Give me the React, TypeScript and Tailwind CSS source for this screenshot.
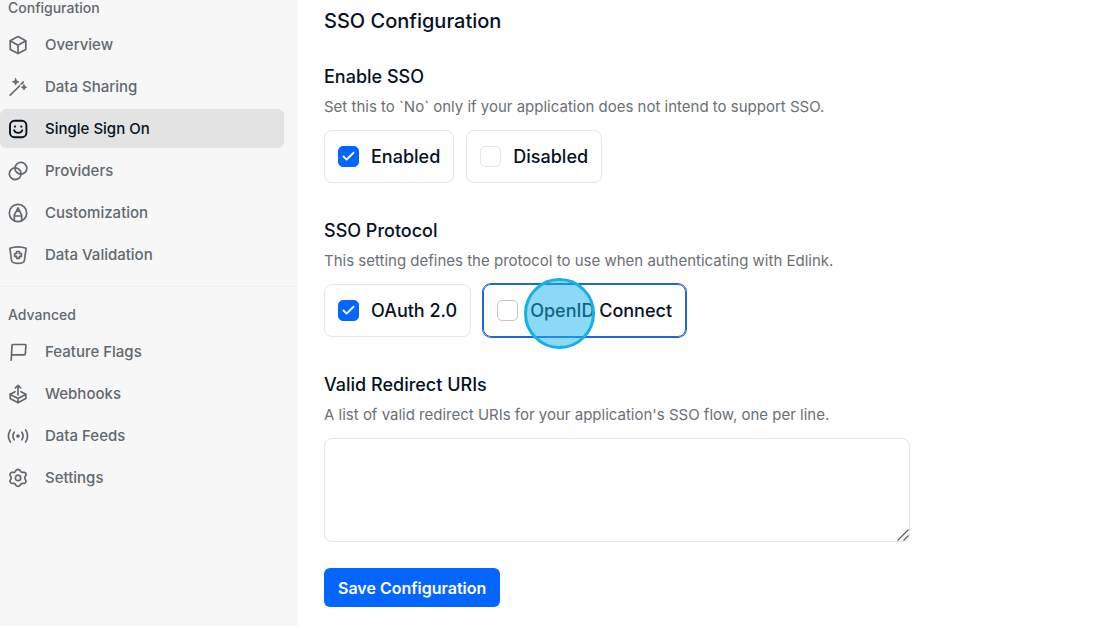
import React, { useState } from "react";
import { Check } from "lucide-react";

const icons: Record<string, React.ReactNode> = {
  cube: (
    <>
      <path d="M10 1.6 17.8 5.8v8.6L10 18.6l-7.8-4.2V5.8Z" />
      <path d="m2.5 6 7.5 4.2L17.5 6M10 10.2v8.2" />
    </>
  ),
  wand: (
    <>
      <path d="M2.2 18.2 11.5 9M13.2 7.2l2-2" />
      <path d="M7.6 1.4 8.6 3.9 11 4.8 8.6 5.7 7.6 8.1 6.7 5.7 4.3 4.8 6.7 3.9Z" fill="currentColor" strokeWidth="0.8" />
      <path d="m16 7.6.8 1.9 1.9.8-1.9.8-.8 1.9-.8-1.9-1.9-.8 1.9-.8Z" fill="currentColor" strokeWidth="0.8" />
    </>
  ),
  smile: (
    <>
      <rect x="2" y="1.8" width="16.4" height="16.4" rx="4.5" strokeWidth="1.9" />
      <path d="M6 11.2c.8 1.800 2.300 2.700 4.200 2.700s3.400-.9 4.200-2.700" />
      <path d="M7 7.500v.1M13.300 7.500v.1" strokeWidth="2.2" />
    </>
  ),
  rings: (
    <>
      <circle cx="7.2" cy="12.8" r="5.9" />
      <circle cx="12.9" cy="7.3" r="5.9" />
    </>
  ),
  brush: (
    <>
      <circle cx="10" cy="10" r="8.7" />
      <path d="M6.3 17.600v-5.400L10 4.800l3.700 7.400v5.400M6.300 13h7.400M8.500 8.200h3" />
    </>
  ),
  shield: (
    <>
      <path d="M1.9 3.3C4.5 2.3 7.2 1.8 10 1.8s5.500.5 8.100 1.500l-1.700 12.200c-.2 1.400-1 2-2.200 2.300-2.800.7-5.600.7-8.400 0-1.200-.3-2-.9-2.200-2.300Z" />
      <path d="M8.600 6.500h2.800v2h2v2.800h-2v2H8.600v-2h-2V8.500h2Z" />
    </>
  ),
  flag: <path d="M3.200 18.200 4 3.500c0-.6.400-1 1-1h12c.6 0 1 .4.900 1l-.6 8.400c0 .6-.4.900-1 .9H3.800" />,
  upload: (
    <>
      <path d="M7 7.700 2.200 10.300v4.300L10 18.700l7.800-4.100v-4.300L13 7.700" />
      <path d="m2.400 10.500 7.600 4 7.600-4M10 14.500v4" />
      <path d="M10 10.800V1.500M7.300 4 10 1.400 12.700 4" />
    </>
  ),
  signal: (
    <>
      <path d="M2.400 3.900c-2.400 3.700-2.400 8.500 0 12.200M6.200 6.200c-1.600 2.300-1.600 5.300 0 7.600M17.600 3.900c2.400 3.700 2.400 8.500 0 12.200M13.800 6.200c1.600 2.300 1.600 5.300 0 7.600" />
      <circle cx="10" cy="10" r="1" fill="currentColor" />
    </>
  ),
  gear: (
    <>
      <path d="M8.300 2.100c.9-.8 2.500-.8 3.400 0l1.200 1.700c.3.400.8.600 1.300.6l2-.1c1.200.3 2 1.700 1.700 2.900l-1 1.900c-.2.500-.2 1.100 0 1.600l1 1.900c.3 1.200-.5 2.600-1.700 2.900l-2-.1c-.5 0-1 .2-1.300.6l-1.200 1.700c-.9.800-2.500.8-3.400 0l-1.200-1.700c-.3-.4-.8-.6-1.300-.6l-2 .1c-1.200-.3-2-1.700-1.700-2.900l1-1.900c.2-.5.2-1.100 0-1.600l-1-1.900C1.800 6 2.600 4.600 3.800 4.300l2 .1c.5 0 1-.2 1.300-.6Z" />
      <circle cx="10" cy="9.900" r="2.700" />
    </>
  ),
};

const sections = [
  {
    title: "Configuration",
    items: [
      { label: "Overview", icon: "cube" },
      { label: "Data Sharing", icon: "wand" },
      { label: "Single Sign On", icon: "smile", active: true },
      { label: "Providers", icon: "rings" },
      { label: "Customization", icon: "brush" },
      { label: "Data Validation", icon: "shield" },
    ],
  },
  {
    title: "Advanced",
    items: [
      { label: "Feature Flags", icon: "flag" },
      { label: "Webhooks", icon: "upload" },
      { label: "Data Feeds", icon: "signal" },
      { label: "Settings", icon: "gear" },
    ],
  },
];

function Icon({ name }: { name: string }) {
  return (
    <svg
      viewBox="0 0 20 20"
      className="h-5 w-5 shrink-0 overflow-visible"
      fill="none"
      stroke="currentColor"
      strokeWidth="1.7"
      strokeLinecap="round"
      strokeLinejoin="round"
      aria-hidden="true"
    >
      {icons[name]}
    </svg>
  );
}

function Sidebar() {
  return (
    <nav className="w-[298px] shrink-0 bg-[#f7f7f7] text-[#62686e]">
      {sections.map((section, i) => (
        <div key={section.title} className={i > 0 ? "mt-3 border-t border-[#efefef] pt-5" : ""}>
          <h2 className="pl-2 text-[14px] font-medium leading-4">{section.title}</h2>
          <ul className="mt-[9px] flex flex-col gap-[3px] pr-[14px]">
            {section.items.map((item) => (
              <li key={item.label}>
                <a
                  href="#"
                  aria-current={item.active ? "page" : undefined}
                  className={`flex h-[39px] items-center gap-[17px] rounded-md pl-2 text-[15px] font-medium leading-[23px] ${
                    item.active ? "bg-[#e3e3e3] text-[#06121f]" : "hover:bg-[#eeeeee]"
                  }`}
                >
                  <Icon name={item.icon} />
                  {item.label}
                </a>
              </li>
            ))}
          </ul>
        </div>
      ))}
    </nav>
  );
}

type OptionProps = {
  label: string;
  checked: boolean;
  onChange: () => void;
  focused?: boolean;
};

function Option({ label, checked, onChange, focused }: OptionProps) {
  return (
    <label
      className={`relative flex h-[53px] items-center gap-3 rounded-lg border px-[13px] text-[18px] font-medium ${
        focused ? "border-[#2367d3] ring-1 ring-[#2367d3]" : "border-[#e6e6e6]"
      }`}
    >
      <span className="relative flex h-[21px] w-[21px]">
        <input
          type="checkbox"
          checked={checked}
          onChange={onChange}
          className={`h-full w-full appearance-none rounded-[5px] border bg-white checked:border-[#0566ff] checked:bg-[#0566ff] ${
            focused ? "border-[#c4c4c4]" : "border-[#e4e4e4]"
          }`}
        />
        {checked && (
          <Check className="pointer-events-none absolute left-[3px] top-[3px] h-[15px] w-[15px] text-white" strokeWidth={3} />
        )}
      </span>
      {label}
      {/* Click marker */}
      {focused && (
        <span className="pointer-events-none absolute -top-[7px] left-10 h-[71px] w-[71px] rounded-full border-[3px] border-[#14b0e6] bg-[#18b3eb]/50" />
      )}
    </label>
  );
}

function Field({ id, title, hint, children }: { id: string; title: string; hint: string; children: React.ReactNode }) {
  return (
    <section role="group" aria-labelledby={id}>
      <h2 id={id} className="text-[18px] font-medium leading-6">
        {title}
      </h2>
      <p className="mt-[6px] mb-[11px] text-[15px] leading-6 text-[#6c7074]">{hint}</p>
      {children}
    </section>
  );
}

export default function App() {
  const [enabled, setEnabled] = useState(true);
  const [oauth, setOauth] = useState(true);
  const [openid, setOpenid] = useState(false);

  return (
    <div className="flex min-h-screen bg-white font-['Inter',sans-serif] text-[#06121f]">
      <Sidebar />
      <main className="min-w-0 flex-1 px-[26px] pt-[7px]">
        <h1 className="text-[20px] font-medium leading-7">SSO Configuration</h1>

        <form className="mt-[30px] flex flex-col gap-9" onSubmit={(e) => e.preventDefault()}>
          <Field id="enable-sso" title="Enable SSO" hint="Set this to `No` only if your application does not intend to support SSO.">
            <div className="flex flex-wrap gap-3">
              <Option label="Enabled" checked={enabled} onChange={() => setEnabled(true)} />
              <Option label="Disabled" checked={!enabled} onChange={() => setEnabled(false)} />
            </div>
          </Field>

          <Field id="sso-protocol" title="SSO Protocol" hint="This setting defines the protocol to use when authenticating with Edlink.">
            <div className="flex flex-wrap gap-3">
              <Option label="OAuth 2.0" checked={oauth} onChange={() => setOauth(!oauth)} />
              <Option label="OpenID Connect" checked={openid} onChange={() => setOpenid(!openid)} focused />
            </div>
          </Field>

          <Field id="redirect-uris" title="Valid Redirect URIs" hint="A list of valid redirect URIs for your application's SSO flow, one per line.">
            <div className="relative max-w-[586px]">
              <textarea
                aria-labelledby="redirect-uris"
                className="block h-[104px] w-full resize-none rounded-lg border border-[#e4e4e4] p-3 text-[15px] outline-none"
              />
              <svg
                viewBox="0 0 12 12"
                className="pointer-events-none absolute bottom-px right-px h-3 w-3"
                stroke="#5c5c5c"
                strokeWidth="1.2"
                aria-hidden="true"
              >
                <path d="M.5 11.500 11.500.5M6.500 11.500l5-5" />
              </svg>
            </div>
            <button type="submit" className="mt-[26px] h-[39px] rounded-md bg-[#0566ff] px-[14px] text-[16px] font-semibold text-white">
              Save Configuration
            </button>
          </Field>
        </form>
      </main>
    </div>
  );
}
